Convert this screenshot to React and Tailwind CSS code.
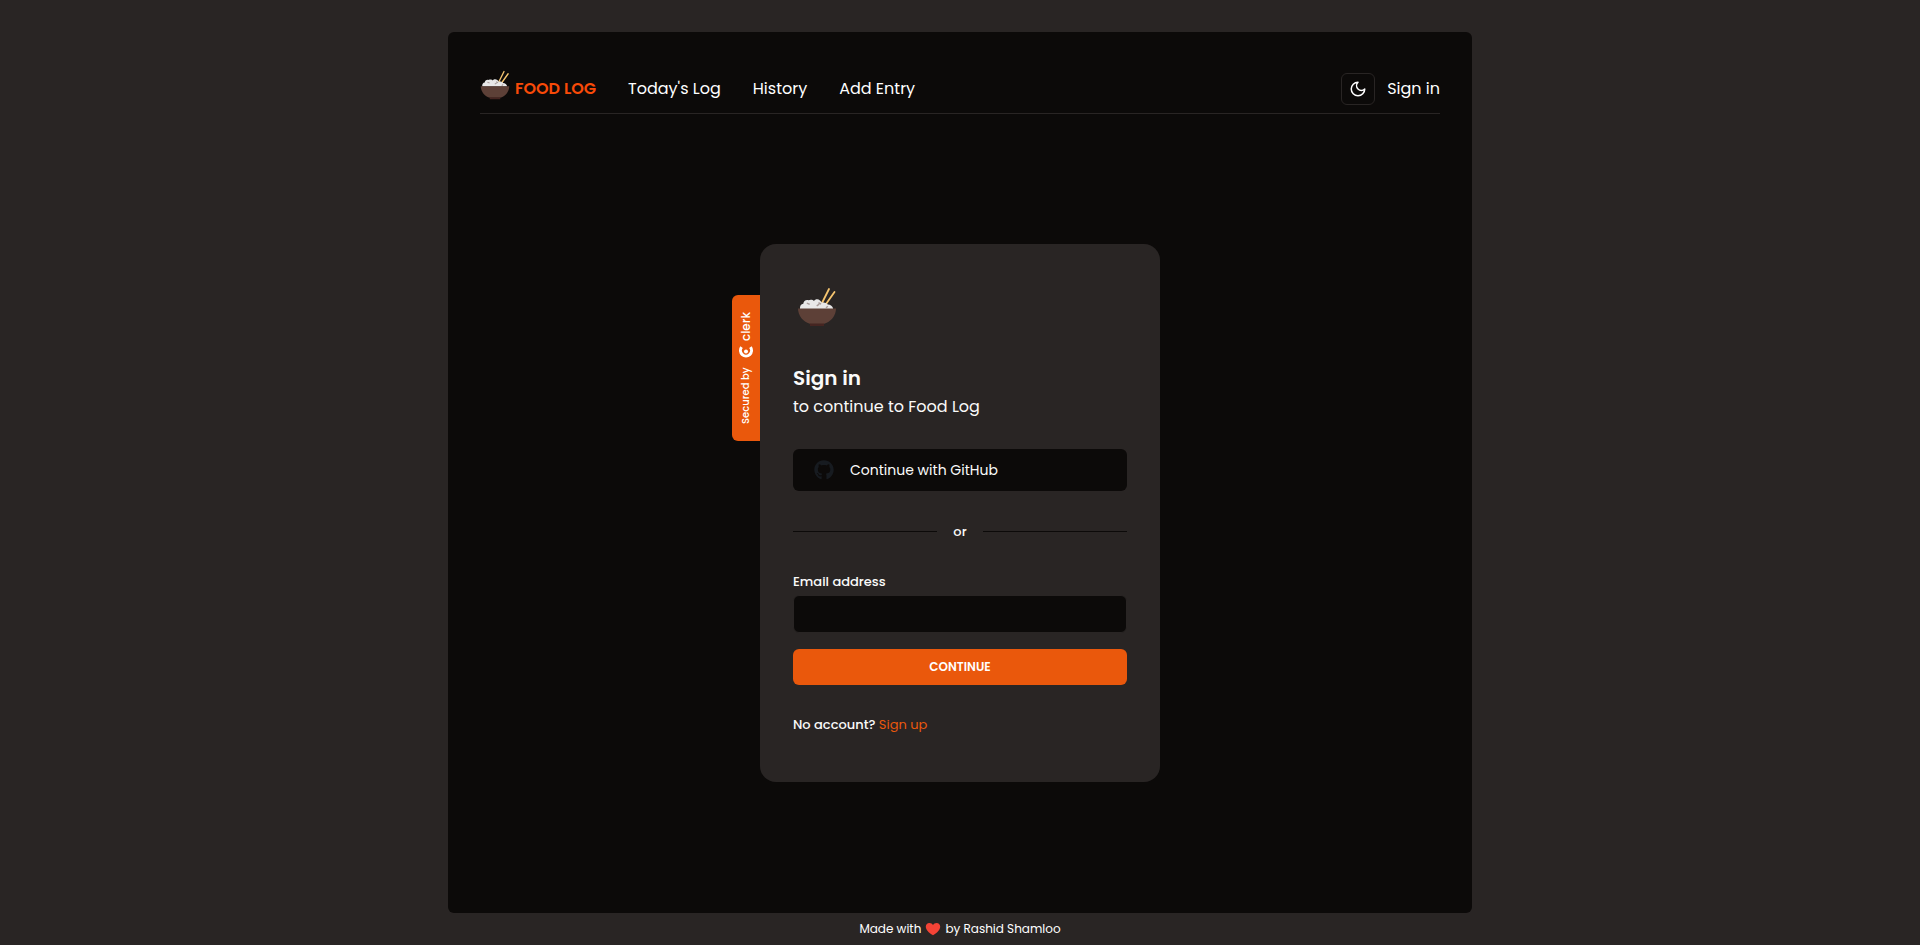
import { FaGithub } from "react-icons/fa";

function RiceBowl({ className }) {
  return (
    <svg viewBox="4 4 40 40" className={className} aria-hidden="true">
      <g stroke="#f6c56f" strokeWidth="1.8" strokeLinecap="round">
        <path d="M36 6 29 20" />
        <path d="M41.500 9 33 21" />
      </g>
      <path
        d="M7 26c-.3-3 1-5 3.300-5.200C10.500 18 13 16.500 15.500 17.300 17.500 16.200 20 16.800 21 18c1-1.800 4-2.500 6-.6 1.200 1 1.500 2 2.200 2.200 2.300-.5 4.500.4 5.600 1.800 2.600 0 5 1.600 5.400 4.600Z"
        fill="#e8e8e8"
      />
      <g fill="#a79a98">
        <path d="m14 19.500 3 1.200-.6 1.300-2.800-1.200Z" />
        <path d="m23.300 22.300 2.600-1.800.8 1.200-2.600 1.700Z" />
        <path d="m25.800 19 2.600 1.500-.7 1.200-2.600-1.500Z" />
        <path d="m32.500 24.300 2-1.600.8 1-1.800 1.500Z" />
      </g>
      <path d="M5 25.500h38c0 7-5 13.500-12.500 15.500h-13C10 39 5 32.500 5 25.500Z" fill="#5d4037" />
      <path d="M17 40.500h14V43H17Z" fill="#452521" />
    </svg>
  );
}

function MoonIcon({ className }) {
  return (
    <svg
      viewBox="0 0 24 24"
      className={className}
      fill="none"
      stroke="currentColor"
      strokeWidth="2"
      strokeLinecap="round"
      strokeLinejoin="round"
      aria-hidden="true"
    >
      <path d="M12 3a6 6 0 0 0 9 9 9 9 0 1 1-9-9Z" />
    </svg>
  );
}

function ClerkMark({ className }) {
  return (
    <svg viewBox="0 0 14 14" className={className} fill="none" aria-hidden="true">
      <circle cx="7.400" cy="7" r="2" fill="white" />
      <path d="M11.800 2.600A5.500 5.500 0 1 0 11.800 11.400" stroke="white" strokeWidth="3" />
    </svg>
  );
}

function Header() {
  return (
    <header className="flex h-[50px] items-end justify-between border-b border-stone-800 pb-2">
      <nav className="flex h-8 items-center gap-8 text-base text-white">
        <a href="#home" className="flex items-center gap-[5px] font-semibold text-[#f94a08]">
          <RiceBowl className="mb-2 size-[30px]" />
          FOOD LOG
        </a>
        <a href="#today">Today's Log</a>
        <a href="#history">History</a>
        <a href="#add">Add Entry</a>
      </nav>
      <div className="flex items-center gap-3">
        <button
          type="button"
          aria-label="Toggle theme"
          className="flex h-8 w-[34px] items-center justify-center rounded-md border border-stone-800 text-white"
        >
          <MoonIcon className="size-[18px]" />
        </button>
        <a href="#sign-in" className="text-base text-white">
          Sign in
        </a>
      </div>
    </header>
  );
}

function SecuredBadge() {
  return (
    <div className="absolute top-[51px] right-full flex h-[146px] w-7 rotate-180 items-center justify-center gap-2 rounded-r-md bg-[#ea580c] text-[10px] leading-4 font-medium text-white [writing-mode:vertical-rl]">
      <span>Secured by</span>
      <a href="#clerk" className="flex items-center gap-1 text-xs leading-4">
        <ClerkMark className="size-[14px] rotate-90" />
        clerk
      </a>
    </div>
  );
}

function SignInCard() {
  return (
    <section className="relative w-[400px] rounded-2xl bg-stone-800 px-[33px] pt-[39px] pb-[49px] text-stone-50">
      <SecuredBadge />
      <RiceBowl className="m-1 size-10" />
      <h1 className="mt-9 text-xl leading-[30px] font-semibold">Sign in</h1>
      <p className="text-base leading-7">to continue to Food Log</p>
      <button
        type="button"
        className="mt-7 flex h-[42px] w-full items-center gap-4 rounded-md bg-stone-950 px-[21px] text-sm"
      >
        <FaGithub className="size-5 text-[#171b20]" />
        Continue with GitHub
      </button>
      <div className="mt-8 flex items-center gap-4 text-[13px] leading-[18px] font-medium">
        <span className="h-px flex-1 bg-stone-950" />
        or
        <span className="h-px flex-1 bg-stone-950" />
      </div>
      <form onSubmit={(event) => event.preventDefault()}>
        <label htmlFor="email" className="mt-8 block text-[13px] leading-[18px] font-medium">
          Email address
        </label>
        <input
          id="email"
          type="email"
          className="mt-1 block h-[38px] w-full rounded-md border border-stone-800 bg-stone-950 px-4 text-sm"
        />
        <button
          type="submit"
          className="mt-4 block h-9 w-full rounded-md bg-[#ea580c] text-xs font-semibold text-white"
        >
          CONTINUE
        </button>
      </form>
      <p className="mt-8 text-[13px] leading-4 font-medium">
        No account?{" "}
        <a href="#sign-up" className="font-normal text-[#ea580c]">
          Sign up
        </a>
      </p>
    </section>
  );
}

export default function App() {
  return (
    <div className="flex min-h-screen flex-col items-center bg-stone-800 pt-8 font-['Poppins','Inter',sans-serif]">
      <div className="flex w-full max-w-5xl flex-1 flex-col rounded-md bg-stone-950 px-8 pt-8">
        <Header />
        <main className="flex flex-1 items-center justify-center pb-0.5">
          <SignInCard />
        </main>
      </div>
      <footer className="flex h-8 items-center gap-1 text-xs text-white">
        Made with
        <svg viewBox="0 0 16 14" className="h-[14px] w-4" aria-hidden="true">
          <path
            d="M8 13.300C3.500 10.800.8 7.800.8 4.600.8 2.400 2.400.9 4.400.9 6 .9 7.300 1.700 8 3 8.700 1.700 10 .9 11.600.9c2 0 3.600 1.500 3.600 3.700 0 3.200-2.700 6.200-7.200 8.700Z"
            fill="#f44336"
          />
        </svg>
        by Rashid Shamloo
      </footer>
    </div>
  );
}
